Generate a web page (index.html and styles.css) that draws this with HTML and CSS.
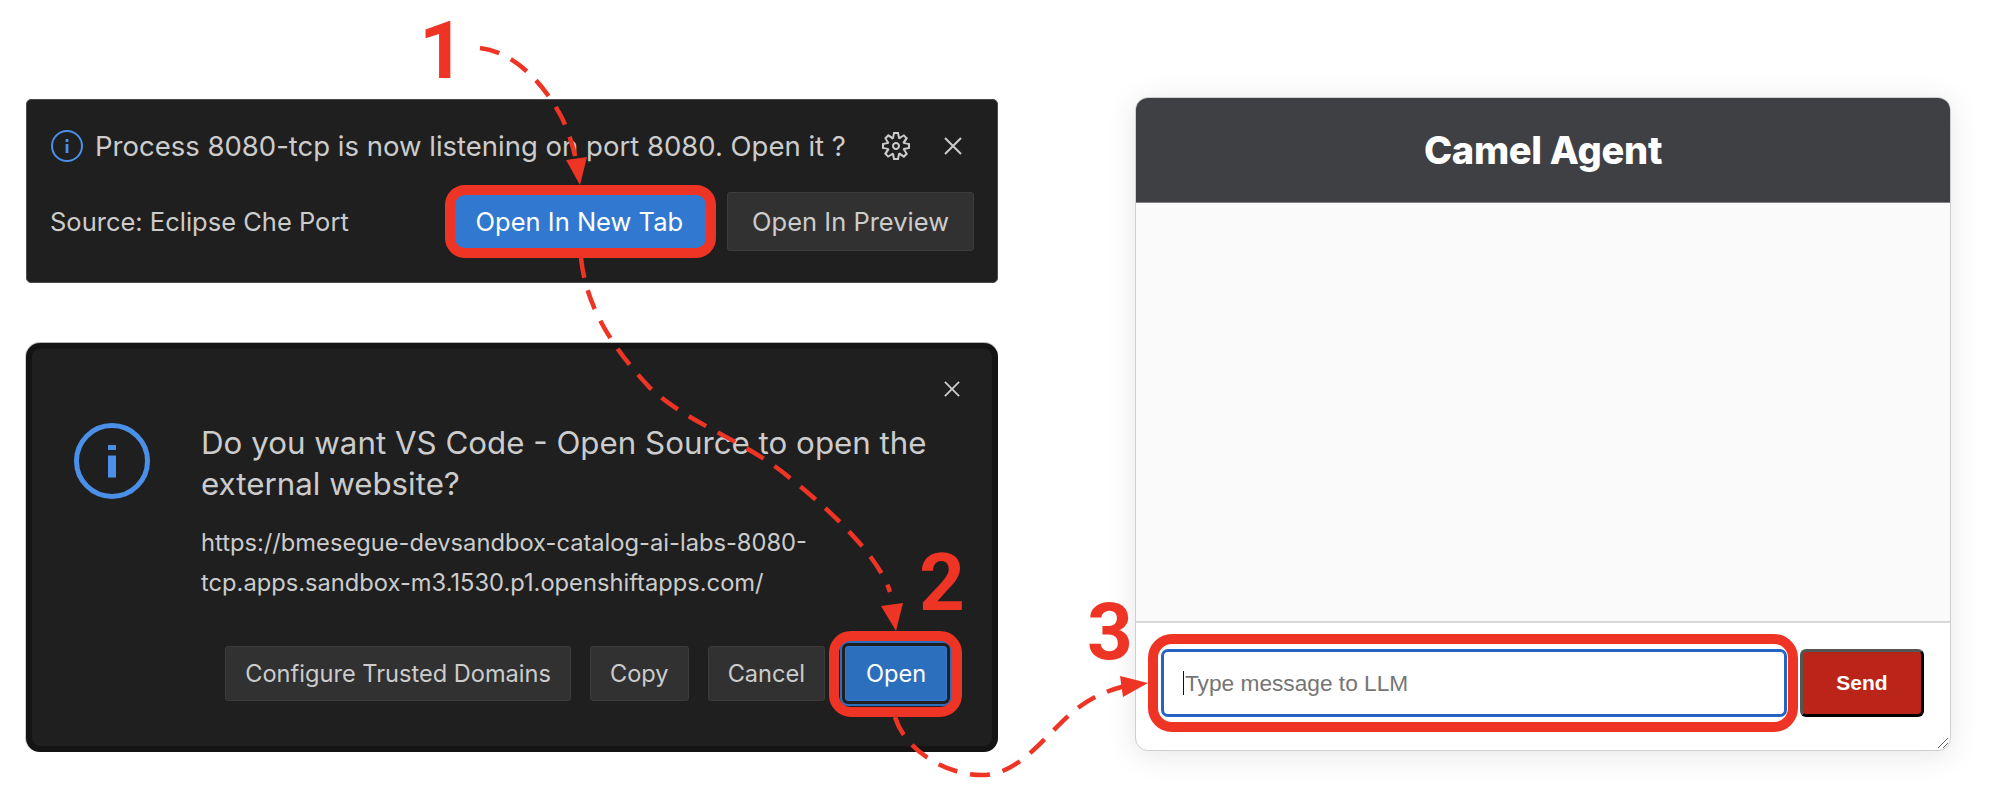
FILE: index.html
```html
<!DOCTYPE html>
<html lang="en">
<head>
  <meta charset="UTF-8">
  <meta name="viewport" content="width=device-width, initial-scale=1.0">
  <title>Camel Agent - Open the port</title>
  <link rel="stylesheet" href="styles.css">
</head>
<body>
  <div class="page">
    <div class="left-col">

      <div class="toast">
        <div class="toast-top">
          <svg class="info-small" viewBox="0 0 32 32">
            <circle cx="16" cy="16" r="15"/>
            <rect x="14.6" y="9" width="2.8" height="3"/>
            <rect x="14.6" y="14" width="2.8" height="9"/>
          </svg>
          <span class="toast-msg">Process 8080-tcp is now listening on port 8080. Open it ?</span>
          <svg class="gear" viewBox="0 0 16 16">
            <path fill-rule="evenodd" d="M9.1 4.4L8.6 2H7.4l-.5 2.4-.7.3-2-1.3-.9.8 1.3 2-.2.7-2.4.5v1.2l2.4.5.3.8-1.3 2 .8.8 2-1.3.8.3.4 2.3h1.2l.5-2.4.8-.3 2 1.3.8-.8-1.3-2 .3-.8 2.3-.4V7.4l-2.4-.5-.3-.8 1.3-2-.8-.8-2 1.3-.7-.2zM9.4 1l.5 2.4L12 2.1l2 2-1.4 2.1 2.4.4v2.8l-2.4.5L14 12l-2 2-2.1-1.4-.5 2.4H6.6l-.5-2.4L4 13.9l-2-2 1.4-2.1L1 9.4V6.6l2.4-.5L2.1 4l2-2 2.1 1.4.4-2.4h2.8zm.6 7c0 1.1-.9 2-2 2s-2-.9-2-2 .9-2 2-2 2 .9 2 2zM8 9c.6 0 1-.4 1-1s-.4-1-1-1-1 .4-1 1 .4 1 1 1z"/>
          </svg>
          <svg class="close toast-close" viewBox="0 0 18 18"><path d="M1 1l16 16M17 1L1 17"/></svg>
        </div>
        <div class="toast-bottom">
          <span class="toast-source">Source: Eclipse Che Port</span>
          <button class="btn btn-primary btn-tall">Open In New Tab</button>
          <button class="btn btn-tall">Open In Preview</button>
        </div>
      </div>

      <div class="dialog">
        <div class="dialog-head">
          <svg class="close dialog-close" viewBox="0 0 18 18"><path d="M1 1l16 16M17 1L1 17"/></svg>
        </div>
        <div class="dialog-body">
          <svg class="info-big" viewBox="0 0 76 76">
            <circle cx="38" cy="38" r="35.5"/>
            <rect x="34" y="22" width="8" height="5"/>
            <rect x="34" y="32.5" width="8" height="22"/>
          </svg>
          <div class="dialog-text">
            <h2>Do you want VS Code - Open Source to open the external website?</h2>
            <p>https://bmesegue-devsandbox-catalog-ai-labs-8080-<br>tcp.apps.sandbox-m3.1530.p1.openshiftapps.com/</p>
          </div>
        </div>
        <div class="dialog-actions">
          <button class="btn">Configure Trusted Domains</button>
          <button class="btn">Copy</button>
          <button class="btn">Cancel</button>
          <button class="btn btn-primary btn-focus">Open</button>
        </div>
      </div>
    </div>

    <div class="chat">
      <div class="chat-header">Camel Agent</div>
      <div class="chat-messages"></div>
      <div class="chat-footer">
        <div class="chat-input"><i class="caret"></i><span>Type message to LLM</span></div>
        <button class="send">Send</button>
      </div>
      <svg class="resizer" viewBox="0 0 12 12"><path d="M1 11L11 1M6 11l5-5"/></svg>
    </div>
  </div>

  <!-- red annotations drawn over the screenshots -->
  <svg class="notes" width="1990" height="806" viewBox="0 0 1990 806">
    <rect class="note-box" x="450" y="190" width="261" height="63" rx="15"/>
    <rect class="note-box" x="834" y="636" width="123" height="76" rx="17"/>
    <rect class="note-box" x="1153" y="639" width="640" height="88" rx="19"/>

    <path class="note-line" d="M480 48C515 52 545 85 562 118C570 135 574 150 577 165"/>
    <path class="note-line" d="M581 258C586 305 610 345 650 388C690 425 745 440 790 478C840 518 880 560 890 592"/>
    <path class="note-line" d="M895 717C905 750 945 775 982 775C1020 775 1045 735 1075 710C1095 695 1110 690 1125 686"/>

    <polygon class="note-head" points="580,185 566,160 587,157"/>
    <polygon class="note-head" points="896,631 881,606 903,603"/>
    <polygon class="note-head" points="1148,683 1120,676 1123,697"/>

    <text class="note-num" x="419" y="78">1</text>
    <text class="note-num" x="919" y="610">2</text>
    <text class="note-num" x="1087" y="659">3</text>
  </svg>
</body>
</html>
```

FILE: styles.css
```css
body {
  margin: 0;
  background: #fff;
  font-family: Inter, "Liberation Sans", sans-serif;
  width: 1990px;
  height: 806px;
  overflow: hidden;
  position: relative;
}
.page {
  display: flex;
  justify-content: space-between;
  padding: 97px 39px 0 26px;
}
.left-col {
  width: 972px;
  padding-top: 2px;
  display: flex;
  flex-direction: column;
  gap: 60px;
}

/* shared dark theme buttons */
.btn {
  height: 55px;
  padding: 0 19px;
  font-family: Inter, sans-serif;
  font-size: 23.6px;
  color: #cccccc;
  background: #313131;
  border: 1px solid #3c3c3c;
  border-radius: 3px;
}
.btn-tall {
  height: 59px;
  padding: 0 24px;
  font-size: 25.5px;
}
.btn-primary {
  color: #fff;
  background: #3078d0;
  border-color: #3078d0;
}
.btn-focus {
  width: 102px;
  padding: 0;
  margin-left: 1px;
  background: #2c6fbd;
  box-shadow: 0 0 0 3px #1f1f1f, 0 0 0 5px #2c6fbd;
}
.close path {
  fill: none;
  stroke: #cccccc;
  stroke-width: 2;
}

/* notification */
.toast {
  box-sizing: border-box;
  height: 184px;
  padding: 30px 23px 0;
  background: #1f1f1f;
  border: 1px solid #4a4a4a;
  border-radius: 5px;
}
.toast-top {
  display: flex;
  align-items: center;
  height: 32px;
}
.info-small {
  width: 32px;
  height: 32px;
  flex: none;
  margin-left: 1px;
  margin-right: 12px;
}
.info-small circle {
  fill: none;
  stroke: #4a90e8;
  stroke-width: 2;
}
.info-small rect { fill: #4a90e8; }
.toast-msg {
  flex: 1;
  font-size: 27.5px;
  color: #cccccc;
  white-space: nowrap;
}
.gear {
  width: 32px;
  height: 32px;
  flex: none;
  fill: #cccccc;
}
.toast-close {
  width: 18px;
  height: 18px;
  flex: none;
  margin-left: 32px;
  margin-right: 12px;
}
.toast-bottom {
  display: flex;
  align-items: center;
  gap: 19px;
  margin-top: 30px;
}
.toast-source {
  flex: 1;
  font-size: 25.5px;
  color: #cccccc;
}

/* trusted domain dialog */
.dialog {
  box-sizing: border-box;
  height: 409px;
  padding: 0 45px 0 42px;
  background: #1f1f1f;
  border: 6px solid #141414;
  border-radius: 14px;
  box-shadow: 0 -1px 0 #b5b5b5, -1px 0 0 #d0d0d0;
}
.dialog-head {
  display: flex;
  justify-content: flex-end;
  padding-top: 32px;
}
.dialog-close {
  width: 16px;
  height: 16px;
  margin-right: -13px;
}
.dialog-body {
  display: flex;
  gap: 51px;
  margin-top: 26px;
}
.info-big {
  width: 76px;
  height: 76px;
  flex: none;
}
.info-big circle {
  fill: none;
  stroke: #4a90e8;
  stroke-width: 5;
}
.info-big rect { fill: #4a90e8; }
.dialog-text h2 {
  margin: 0;
  width: 740px;
  font-size: 31.3px;
  font-weight: 400;
  line-height: 41px;
  color: #cccccc;
}
.dialog-text p {
  margin: 18px 0 0;
  font-size: 23.7px;
  line-height: 40px;
  color: #cccccc;
  white-space: nowrap;
}
.dialog-actions {
  display: flex;
  justify-content: flex-end;
  gap: 19px;
  margin-top: 43px;
}

/* chat window */
.chat {
  box-sizing: border-box;
  width: 816px;
  height: 654px;
  position: relative;
  display: flex;
  flex-direction: column;
  border: 1px solid #cfcfcf;
  border-radius: 13px;
  background: #fff;
  box-shadow: 0 4px 30px rgba(0, 0, 0, 0.1);
  overflow: hidden;
}
.chat-header {
  height: 104px;
  flex: none;
  display: flex;
  align-items: center;
  justify-content: center;
  background: #3f4044;
  color: #fff;
  font-size: 38px;
  font-weight: 800;
  letter-spacing: -0.3px;
}
.chat-messages {
  flex: 1;
  background: #fafafa;
  border-top: 1px solid #808080;
  border-bottom: 2px solid #d8d8d8;
}
.chat-footer {
  height: 127px;
  flex: none;
  display: flex;
  gap: 13px;
  padding: 26px 26px 0 25px;
  box-sizing: border-box;
}
.chat-input {
  box-sizing: border-box;
  flex: 1;
  height: 68px;
  display: flex;
  align-items: center;
  padding-left: 19px;
  border: 3px solid #2563c4;
  border-radius: 7px;
  font-family: "Liberation Sans", sans-serif;
  font-size: 22.7px;
  color: #757575;
}
.caret {
  width: 1px;
  height: 24px;
  margin-right: 1px;
  background: #111;
}
.send {
  box-sizing: border-box;
  width: 124px;
  height: 68px;
  padding: 0;
  background: #bb2418;
  color: #fff;
  font-family: "Liberation Sans", sans-serif;
  font-size: 21px;
  font-weight: 700;
  border-style: solid;
  border-width: 3px;
  border-color: #555 #000 #000 #555;
  border-radius: 6px;
}
.resizer {
  position: absolute;
  right: 1px;
  bottom: 1px;
  width: 12px;
  height: 12px;
}
.resizer path {
  fill: none;
  stroke: #666;
  stroke-width: 1;
}

/* annotations */
.notes {
  position: absolute;
  left: 0;
  top: 0;
  pointer-events: none;
}
.note-box {
  fill: none;
  stroke: #ee3424;
  stroke-width: 10;
}
.note-line {
  fill: none;
  stroke: #ee3424;
  stroke-width: 4.5;
  stroke-dasharray: 20 13;
}
.note-head { fill: #ee3424; }
.note-num {
  fill: #ee3424;
  font-family: Roboto, "Liberation Sans", sans-serif;
  font-size: 80px;
  font-weight: 700;
}
```
